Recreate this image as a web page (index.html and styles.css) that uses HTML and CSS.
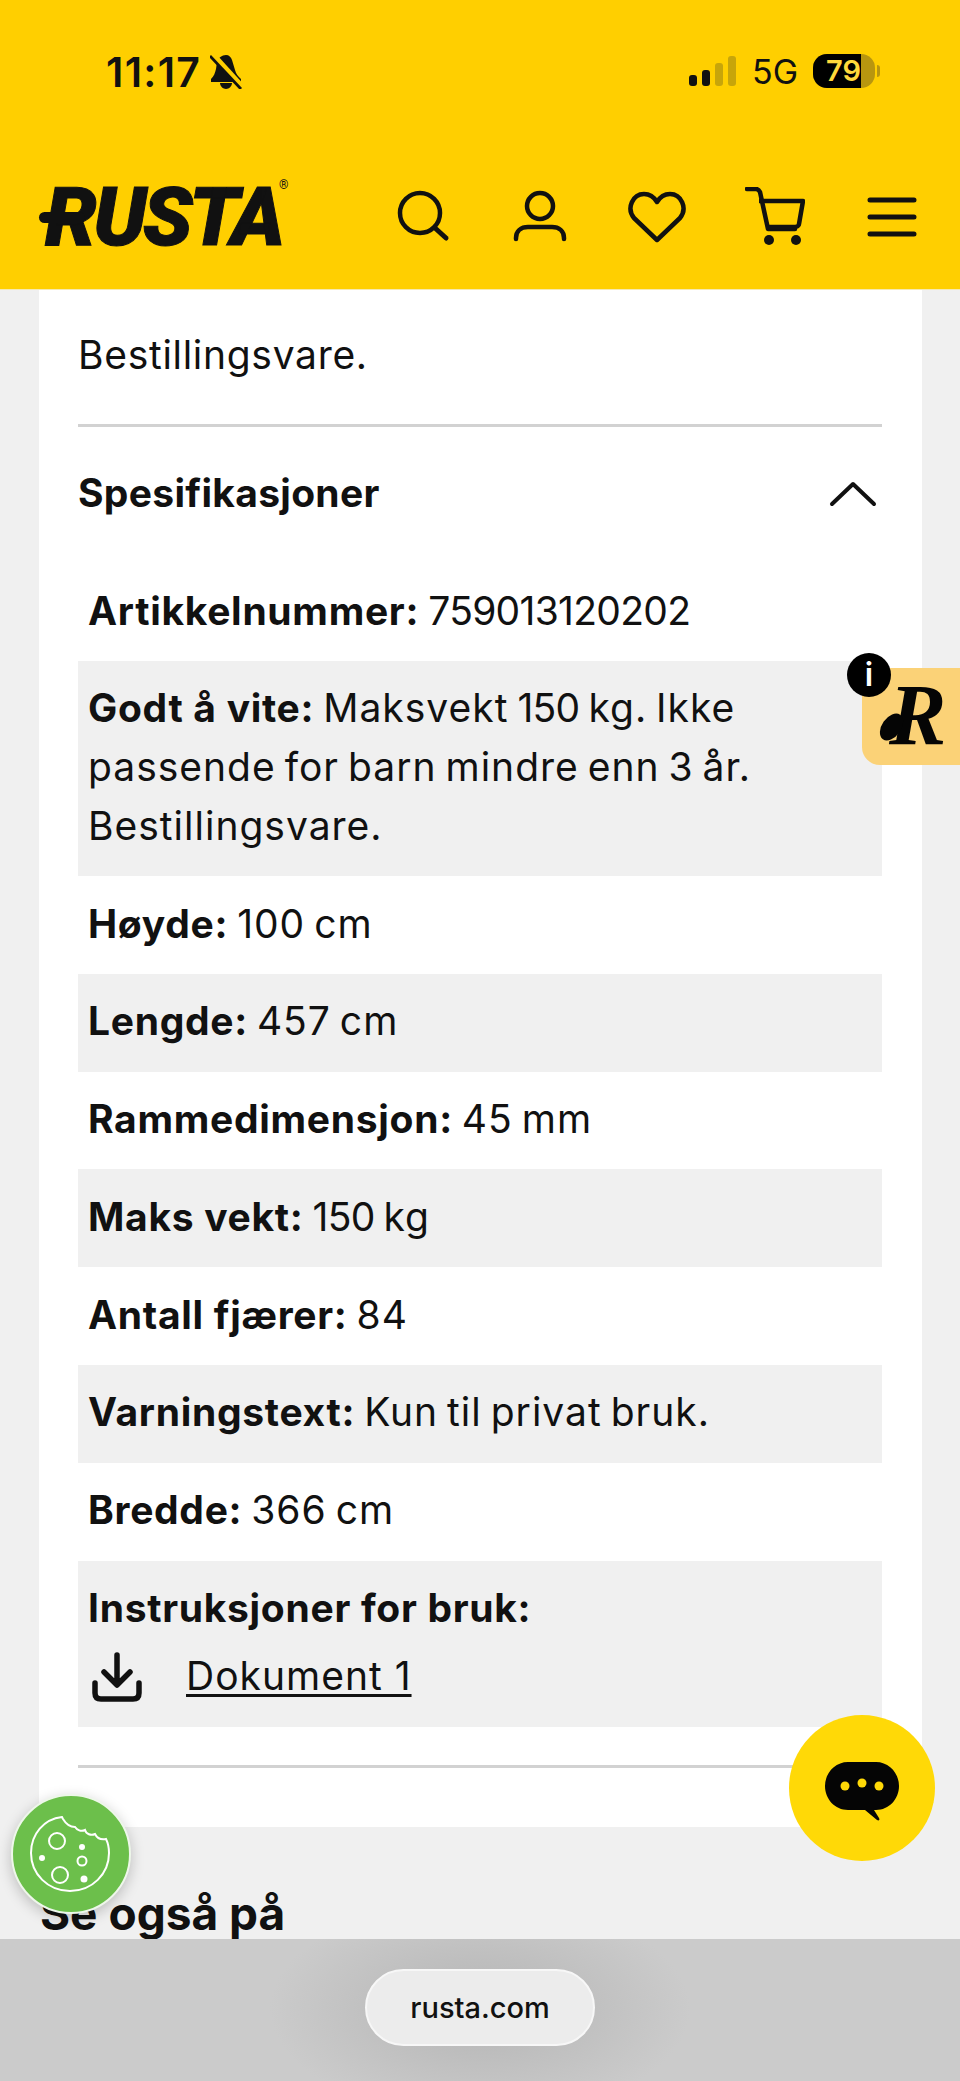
FILE: index.html
```html
<!DOCTYPE html>
<html lang="no">
<head>
<meta charset="UTF-8" />
<meta name="viewport" content="width=device-width, initial-scale=1" />
<title>Rusta - Spesifikasjoner</title>
<link rel="stylesheet" href="styles.css">
</head>
<body>

<header class="topbar">
  <div class="status">
    <div class="status-left">
      <span class="time">11:17</span>
      <svg class="bell" viewBox="0 0 32 34" width="32" height="34">
        <path d="M16 0c3 0 5 2 6 5l3 10c1 4 3 6 6 9v3H1v-3c3-3 4-6 5-10l1-7c1-4 5-7 9-7z" fill="#111"/>
        <path d="M10 28h12c0 3-3 6-6 6s-6-3-6-6z" fill="#111"/>
        <path d="M3 0l29 32" stroke="#ffcf00" stroke-width="6"/>
        <path d="M0 1l31 33" stroke="#111" stroke-width="2.8"/>
      </svg>
    </div>
    <div class="status-right">
      <div class="signal">
        <i class="bar bar-1"></i><i class="bar bar-2"></i><i class="bar bar-3"></i><i class="bar bar-4"></i>
      </div>
      <span class="network">5G</span>
      <div class="battery"><span class="battery-level">79</span></div>
      <i class="battery-nub"></i>
    </div>
  </div>
  <nav class="nav">
    <a class="logo">RUSTA<sup class="reg">®</sup></a>
    <div class="nav-icons">
      <svg viewBox="0 0 60 60" width="60" height="60"><circle cx="28" cy="26" r="20" fill="none" stroke="#111" stroke-width="4.5"/><path d="M43 41l11 10" stroke="#111" stroke-width="5" stroke-linecap="round"/></svg>
      <svg viewBox="0 0 60 60" width="60" height="60"><circle cx="30" cy="19" r="13" fill="none" stroke="#111" stroke-width="4.5"/><path d="M6 52v-1c0-7 5-11 12-11h24c7 0 12 4 12 11v1" fill="none" stroke="#111" stroke-width="4.5" stroke-linecap="round"/></svg>
      <svg viewBox="0 0 60 60" width="60" height="60"><path d="M30 53L7 31C-1 21 6 7 17 7c6 0 10 3 13 8 3-5 7-8 13-8 11 0 18 14 10 24z" fill="none" stroke="#111" stroke-width="4.5" stroke-linejoin="round"/></svg>
      <svg viewBox="0 0 60 60" width="60" height="60"><path d="M2 2h9c2 0 3 1 4 3l8 37h27" fill="none" stroke="#111" stroke-width="4.5" stroke-linecap="round" stroke-linejoin="round"/><path d="M14 14h44l-4 23c0 2-2 3-4 3H21" fill="none" stroke="#111" stroke-width="4.5" stroke-linejoin="round"/><circle cx="24" cy="53" r="5" fill="#111"/><circle cx="51" cy="53" r="5" fill="#111"/></svg>
      <svg viewBox="0 0 60 60" width="60" height="60"><path d="M8 13h44M8 30h44M8 47h44" stroke="#111" stroke-width="5" stroke-linecap="round"/></svg>
    </div>
  </nav>
</header>

<main class="page">
  <section class="card">
    <p class="intro">Bestillingsvare.</p>
    <div class="accordion-head">
      <h3>Spesifikasjoner</h3>
      <svg class="chevron" viewBox="0 0 48 28" width="48" height="28"><path d="M3 25L24 5l21 20" fill="none" stroke="#111" stroke-width="4" stroke-linecap="round" stroke-linejoin="round"/></svg>
    </div>
    <div class="spec-list">
      <div class="spec"><b>Artikkelnummer:</b> <span class="num">759013120202</span></div>
      <div class="spec"><b>Godt å vite:</b> Maksvekt <span class="num">150</span> kg. Ikke passende for barn mindre enn 3 år. Bestillingsvare.</div>
      <div class="spec"><b>Høyde:</b> 100 cm</div>
      <div class="spec"><b>Lengde:</b> 457 cm</div>
      <div class="spec"><b>Rammedimensjon:</b> 45 mm</div>
      <div class="spec"><b>Maks vekt:</b> <span class="num">150</span> kg</div>
      <div class="spec"><b>Antall fjærer:</b> 84</div>
      <div class="spec"><b>Varningstext:</b> Kun til privat bruk.</div>
      <div class="spec"><b>Bredde:</b> 366 cm</div>
      <div class="spec">
        <b>Instruksjoner for bruk:</b>
        <div class="doc">
          <svg viewBox="0 0 52 52" width="52" height="52"><path d="M26 4v29M13 21l13 13 13-13" fill="none" stroke="#111" stroke-width="5.5" stroke-linecap="round" stroke-linejoin="round"/><path d="M4 32v10c0 4 2 6 6 6h32c4 0 6-2 6-6V32" fill="none" stroke="#111" stroke-width="5.5" stroke-linecap="round"/></svg>
          <a class="doc-link">Dokument 1</a>
        </div>
      </div>
    </div>
  </section>
  <h2 class="also">Se også på</h2>
</main>

<footer class="urlbar">
  <div class="url-pill">rusta.com</div>
</footer>

<div class="badge">
  <span class="badge-r">R</span>
  <span class="badge-info">i</span>
</div>

<div class="chat">
  <svg viewBox="0 0 76 60" width="76" height="60"><path d="M24 1h28c13 0 23 11 23 24S65 49 52 49h-2l5 8c1 2 0 3-2 2L41 49H24C11 49 1 38 1 25S11 1 24 1z" fill="#050505"/><circle cx="21" cy="25" r="4.5" fill="#ffd907"/><circle cx="38" cy="22" r="4.5" fill="#ffd907"/><circle cx="55" cy="25" r="4.5" fill="#ffd907"/></svg>
</div>

<div class="cookie">
  <svg viewBox="0 0 84 80" width="84" height="80" fill="none" stroke="#fff" stroke-width="2">
    <path d="M33 3C15 5 2 20 2 39c0 21 17 38 39 38s39-17 39-38c0-5-1-10-3-14-5 1-9-1-11-5-4 2-9 0-10-4-4 2-8 0-10-3-5 0-9-3-12-8z"/>
    <circle cx="28" cy="27" r="8"/>
    <circle cx="31" cy="61" r="8"/>
    <circle cx="53" cy="47" r="4.5"/>
    <circle cx="13" cy="44" r="3" fill="#fff" stroke="none"/>
    <circle cx="53" cy="33" r="3" fill="#fff" stroke="none"/>
    <circle cx="55" cy="65" r="3.5" fill="#fff" stroke="none"/>
  </svg>
</div>

</body>
</html>
```

FILE: styles.css
```css
:root {
  --yellow: #ffcf00;
  --gray-light: #f0f0f0;
  --ink: #111;
}
html, body {
  margin: 0;
  padding: 0;
}
body {
  position: relative;
  width: 960px;
  height: 2081px;
  overflow: hidden;
  display: flex;
  flex-direction: column;
  background: var(--gray-light);
  color: var(--ink);
  font-family: Inter, "Liberation Sans", sans-serif;
}

/* top */
.topbar {
  height: 289px;
  flex: none;
  background: var(--yellow);
  border-bottom: 1px solid #f6e9b0;
}
.status {
  height: 145px;
  box-sizing: border-box;
  padding: 50px 80px 0 106px;
  display: flex;
  justify-content: space-between;
}
.status-left {
  display: flex;
  align-items: flex-start;
  gap: 9px;
}
.time {
  font-size: 41px;
  line-height: 44px;
  font-weight: 600;
  letter-spacing: 1.3px;
}
.bell {
  margin-top: 5px;
}
.status-right {
  display: flex;
  align-items: flex-start;
  height: 40px;
}
.signal {
  display: flex;
  align-items: flex-end;
  gap: 5px;
  height: 30px;
  margin-top: 6px;
}
.bar {
  width: 8px;
  border-radius: 3px;
  background: #111;
}
.bar-1 { height: 11px; }
.bar-2 { height: 16px; }
.bar-3 { height: 23px; background: #c7a50a; }
.bar-4 { height: 30px; background: #c7a50a; }
.network {
  margin-left: 16px;
  font-size: 34px;
  line-height: 44px;
  width: 61px;
}
.battery {
  width: 62px;
  height: 34px;
  margin-top: 4px;
  border-radius: 14px;
  overflow: hidden;
  background: #b8960f;
}
.battery-level {
  display: block;
  width: 48px;
  height: 34px;
  box-sizing: border-box;
  padding-left: 13px;
  background: #000;
  color: #ffd93b;
  font-size: 29px;
  line-height: 34px;
  font-weight: 600;
}
.battery-nub {
  width: 3px;
  height: 12px;
  margin: 15px 0 0 2px;
  border-radius: 0 3px 3px 0;
  background: #b8960f;
}
.nav {
  display: flex;
  align-items: center;
  justify-content: space-between;
  height: 144px;
  padding: 0 38px 0 39px;
}
.logo {
  position: relative;
  padding-left: 6px;
  font-family: Roboto, Inter, sans-serif;
  font-size: 82px;
  line-height: 80px;
  font-weight: 900;
  font-style: italic;
  letter-spacing: -3.5px;
  -webkit-text-stroke: 1px #111;
  margin-top: -1px;
}
.logo::before {
  content: "";
  position: absolute;
  left: 0;
  top: 35px;
  width: 46px;
  height: 11px;
  border-radius: 6px;
  background: #111;
}
.reg {
  position: absolute;
  top: 2px;
  left: 240px;
  font-size: 12px;
  line-height: 12px;
  font-weight: 400;
  font-style: normal;
  letter-spacing: 0;
  -webkit-text-stroke: 0;
}
.nav-icons {
  display: flex;
  gap: 57.5px;
  align-items: center;
}

/* content */
.page {
  flex: 1;
  overflow: hidden;
  padding: 0 38px 0 39px;
}
.card {
  background: #fff;
  padding: 36px 40px 59px 39px;
}
.intro {
  margin: 0;
  font-size: 39px;
  line-height: 58px;
  letter-spacing: 0.7px;
  padding-bottom: 40px;
  border-bottom: 3px solid #d2d2d2;
}
.accordion-head {
  display: flex;
  align-items: center;
  justify-content: space-between;
  height: 136px;
  box-sizing: border-box;
  padding: 0 5px 5px 0;
}
.accordion-head h3 {
  margin: 0;
  font-size: 39px;
  font-weight: 700;
  letter-spacing: 0.3px;
}
.spec-list {
  padding-bottom: 38px;
  border-bottom: 3px solid #d2d2d2;
}
.spec {
  padding: 18.5px 10px 20.6px 10px;
  font-size: 39px;
  line-height: 58.7px;
  letter-spacing: 1px;
  word-spacing: -3px;
}
.spec:nth-child(even) {
  background: var(--gray-light);
}
.spec b {
  font-weight: 700;
  letter-spacing: 0.7px;
  word-spacing: 0;
}
.num {
  letter-spacing: -0.7px;
}
.doc {
  display: flex;
  align-items: center;
  gap: 43px;
  height: 62px;
  margin-top: 8px;
  margin-bottom: -1px;
  padding-left: 3px;
  word-spacing: 0;
}
.doc-link {
  text-decoration: underline;
  text-decoration-thickness: 3px;
  text-underline-offset: 4px;
}
.also {
  margin: 58px 0 0 1px;
  font-size: 46px;
  line-height: 56px;
  font-weight: 700;
}

/* bottom */
.urlbar {
  height: 142px;
  flex: none;
  display: flex;
  justify-content: center;
  align-items: flex-start;
  background: #cbcbcb;
  background-image: radial-gradient(ellipse 210px 110px at 480px 70px, #b4b4b4, #cbcbcb);
}
.url-pill {
  width: 230px;
  height: 77px;
  margin-top: 30px;
  box-sizing: border-box;
  border: 2px solid #f7f7f7;
  border-radius: 39px;
  background: #ececec;
  text-align: center;
  font-size: 29px;
  line-height: 73px;
  font-weight: 500;
}

/* floating */
.badge {
  position: absolute;
  top: 668px;
  right: 0;
  width: 98px;
  height: 97px;
  border-radius: 18px 0 0 18px;
  background: #fbd277;
}
.badge-r {
  position: absolute;
  left: 27px;
  top: 1px;
  font-family: "Liberation Serif", serif;
  font-size: 86px;
  line-height: 92px;
  font-weight: 700;
  font-style: italic;
  color: #050505;
}
.badge::after {
  content: "";
  position: absolute;
  left: 20px;
  top: 44px;
  width: 19px;
  height: 30px;
  border-radius: 50%;
  background: #050505;
  transform: rotate(35deg);
}
.badge-info {
  position: absolute;
  z-index: 1;
  left: -15px;
  top: -15px;
  width: 44px;
  height: 44px;
  border-radius: 50%;
  background: #000;
  color: #fff;
  text-align: center;
  font-size: 32px;
  line-height: 44px;
  font-weight: 600;
}
.chat {
  position: absolute;
  left: 789px;
  top: 1715px;
  width: 146px;
  height: 146px;
  border-radius: 50%;
  background: #ffd907;
  display: flex;
  align-items: center;
  justify-content: center;
}
.chat svg {
  margin-top: 5px;
}
.cookie {
  position: absolute;
  left: 11px;
  top: 1794px;
  width: 116px;
  height: 116px;
  border: 2px solid #eef7ea;
  border-radius: 50%;
  background: #6cbf4b;
  box-shadow: 0 4px 14px rgba(0, 0, 0, 0.22);
  display: flex;
  align-items: center;
  justify-content: center;
}
```
